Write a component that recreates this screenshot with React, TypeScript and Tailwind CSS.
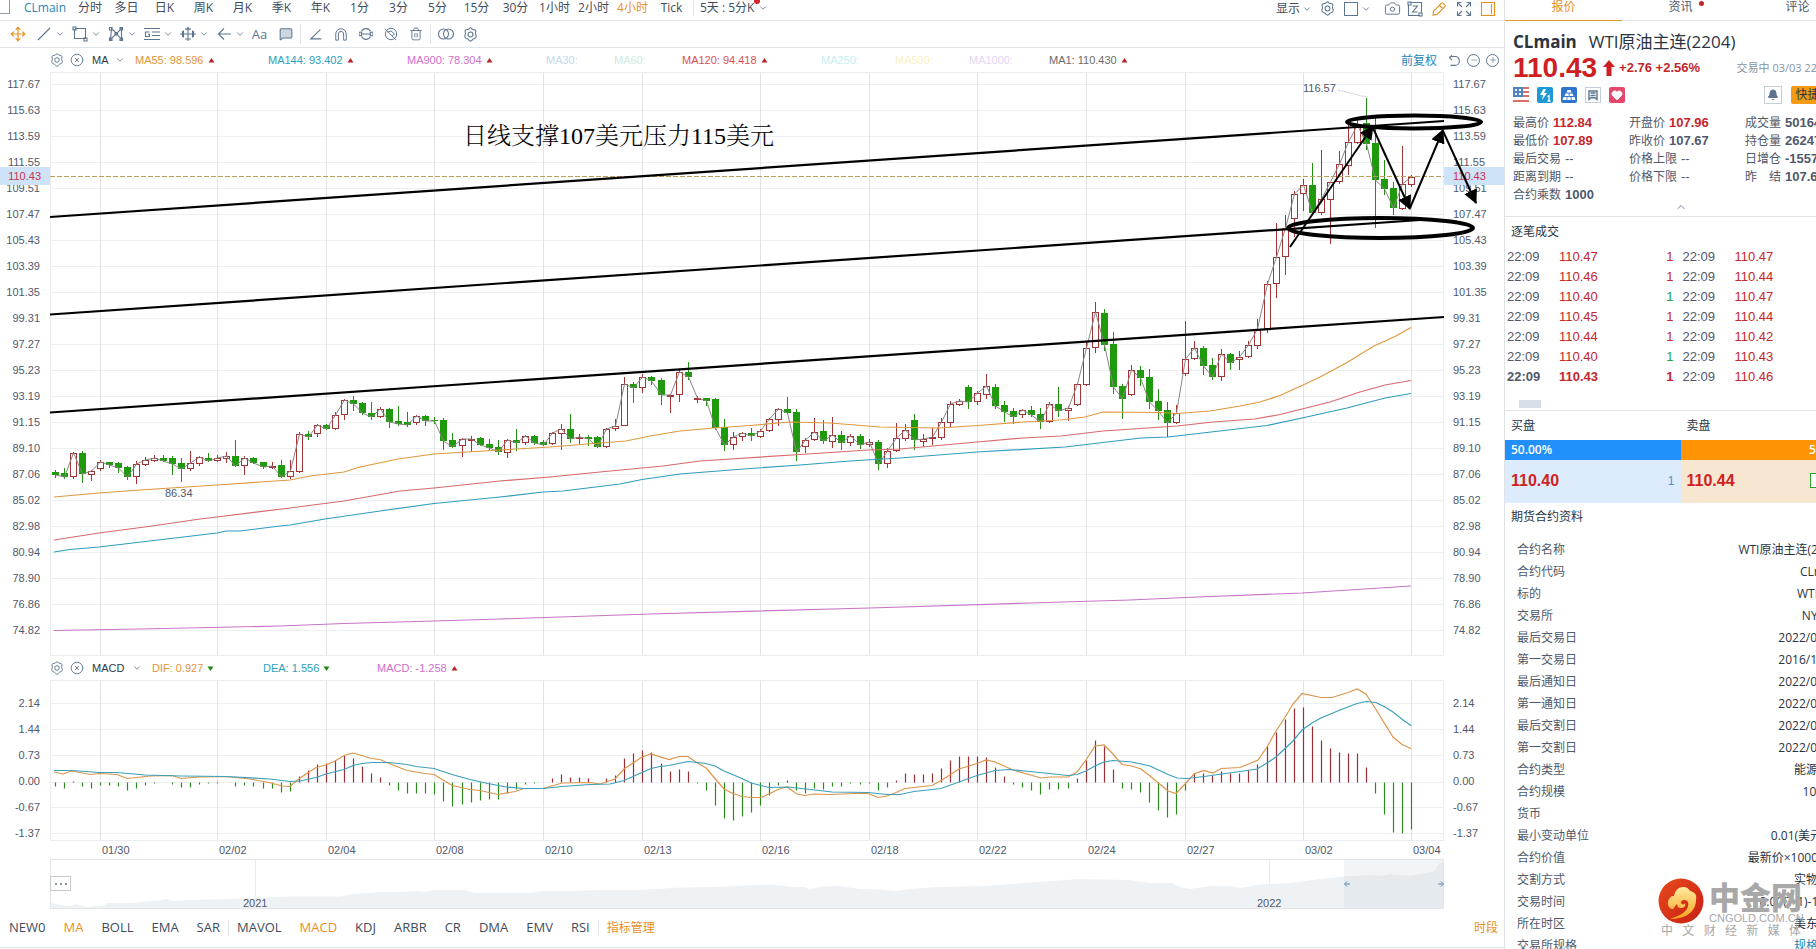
import React from "react";
import {
  Bell,
  Camera,
  ChevronDown,
  ChevronUp,
  CircleX,
  Heart,
  Maximize,
  MessageSquare,
  Minus,
  MoveLeft,
  Move,
  Plus,
  Trash2,
} from "lucide-react";

/* ---------- data ---------- */

// [high, body top, body bottom, low, rising]
type Candle = [number, number, number, number, 0 | 1];

const candles: Candle[] = [
  [470, 472, 475, 478, 0], [468, 473, 477, 479, 0], [452, 453, 477, 479, 1], [451, 453, 474, 483, 0],
  [470, 471, 475, 481, 1], [460, 462, 469, 471, 1], [462, 462, 465, 468, 0], [462, 463, 468, 473, 0],
  [466, 467, 477, 480, 0], [461, 464, 477, 484, 1], [457, 460, 465, 466, 1], [455, 458, 461, 462, 1],
  [455, 458, 461, 462, 0], [456, 458, 464, 475, 0], [458, 463, 469, 482, 0], [451, 463, 469, 471, 1],
  [456, 457, 464, 466, 1], [453, 458, 461, 462, 0], [455, 458, 461, 462, 1], [452, 456, 459, 463, 1],
  [440, 456, 466, 467, 0], [456, 458, 466, 475, 1], [457, 458, 463, 464, 0], [462, 462, 467, 469, 0],
  [462, 466, 468, 469, 1], [460, 465, 477, 478, 0], [460, 471, 477, 479, 1], [432, 434, 472, 473, 1],
  [431, 434, 437, 440, 0], [424, 425, 434, 437, 1], [424, 425, 429, 430, 0], [412, 415, 429, 430, 1],
  [399, 400, 415, 420, 1], [396, 400, 404, 411, 0], [402, 403, 413, 415, 0], [402, 413, 417, 420, 0],
  [407, 409, 417, 418, 1], [408, 409, 422, 428, 0], [406, 421, 424, 426, 0], [412, 422, 425, 427, 0],
  [415, 416, 423, 425, 1], [415, 416, 421, 426, 0], [417, 420, 421, 424, 0], [418, 420, 441, 450, 0],
  [433, 440, 447, 448, 0], [438, 439, 446, 457, 1], [436, 439, 441, 452, 1], [437, 438, 445, 446, 0],
  [439, 444, 448, 450, 0], [440, 447, 452, 455, 0], [439, 440, 453, 458, 1], [429, 440, 443, 451, 0],
  [435, 436, 443, 445, 1], [435, 436, 443, 445, 0], [440, 442, 445, 446, 0], [432, 433, 444, 445, 1],
  [424, 429, 434, 450, 1], [414, 429, 439, 443, 0], [434, 437, 439, 444, 1], [435, 437, 439, 446, 0],
  [436, 437, 447, 448, 0], [428, 429, 447, 448, 1], [419, 426, 429, 431, 1], [377, 384, 426, 426, 1],
  [382, 384, 388, 403, 0], [374, 377, 388, 393, 1], [376, 377, 381, 385, 0], [378, 380, 395, 405, 0],
  [394, 395, 397, 413, 1], [370, 372, 395, 402, 1], [362, 372, 377, 380, 0], [396, 398, 400, 403, 1],
  [398, 398, 401, 406, 0], [398, 399, 428, 430, 0], [419, 427, 445, 451, 0], [432, 437, 445, 450, 1],
  [432, 433, 437, 441, 1], [428, 433, 436, 441, 0], [429, 431, 437, 438, 1], [418, 419, 431, 432, 1],
  [408, 409, 420, 426, 1], [397, 409, 413, 413, 0], [409, 412, 452, 461, 0], [438, 440, 447, 453, 1],
  [418, 432, 440, 441, 1], [420, 431, 441, 444, 0], [417, 435, 442, 448, 1], [431, 435, 443, 450, 0],
  [434, 436, 443, 446, 1], [434, 436, 445, 449, 0], [439, 442, 445, 447, 1], [440, 442, 464, 470, 0],
  [448, 451, 464, 468, 1], [423, 438, 451, 452, 1], [424, 430, 439, 441, 1], [414, 420, 440, 450, 0],
  [434, 439, 442, 447, 1], [428, 437, 439, 445, 1], [418, 422, 438, 440, 1], [401, 404, 423, 427, 1],
  [399, 401, 405, 406, 1], [385, 387, 402, 409, 0], [391, 393, 402, 405, 1], [374, 386, 395, 399, 1],
  [384, 387, 406, 409, 0], [401, 405, 412, 422, 0], [408, 411, 417, 424, 0], [409, 410, 415, 418, 1],
  [406, 410, 415, 417, 0], [408, 414, 422, 429, 0], [402, 404, 422, 423, 1], [387, 404, 411, 417, 0],
  [406, 408, 411, 421, 1], [383, 384, 405, 406, 1], [342, 348, 385, 386, 1], [302, 312, 348, 353, 1],
  [309, 313, 345, 351, 0], [332, 344, 387, 394, 0], [384, 386, 399, 419, 0], [365, 370, 395, 396, 1],
  [366, 370, 378, 386, 0], [369, 377, 402, 409, 0], [389, 401, 411, 420, 0], [402, 410, 423, 437, 0],
  [405, 413, 423, 424, 1], [321, 359, 374, 376, 1], [341, 348, 359, 360, 1], [346, 348, 366, 375, 0],
  [358, 365, 377, 380, 0], [349, 354, 377, 381, 1], [353, 354, 363, 370, 0], [351, 357, 360, 370, 1],
  [341, 345, 357, 358, 1], [319, 329, 346, 349, 1], [281, 284, 329, 333, 1], [223, 257, 284, 298, 1],
  [215, 228, 257, 275, 1], [191, 194, 219, 237, 1], [179, 185, 194, 211, 1], [163, 185, 213, 213, 0],
  [150, 199, 213, 215, 1], [182, 182, 200, 244, 1], [151, 164, 182, 184, 1], [125, 142, 166, 175, 1],
  [120, 125, 143, 144, 1], [98, 123, 144, 150, 0], [117, 143, 180, 228, 0], [160, 179, 189, 195, 0],
  [182, 188, 208, 215, 0], [146, 184, 209, 210, 1], [175, 177, 185, 187, 1],
];

const histogram = [
  -4, -6, 1, -4, -6, -3, -3, -4, -8, -6, -3, -1, 0, -2, -5, -5, -2, -1, -1, 0, -4, -3, -4, -6, -6, -10, -9, 6, 12, 18,
  19, 22, 27, 24, 16, 9, 5, -3, -8, -11, -11, -11, -12, -19, -24, -22, -20, -18, -17, -17, -11, -7, -2, -1, 0, 4, 8, 5,
  5, 4, 0, 4, 7, 24, 29, 32, 30, 19, 11, 13, 11, -1, -8, -23, -36, -38, -34, -30, -23, -13, -3, 2, -8, -11, -6, -7, -4,
  -4, -1, -2, -1, -8, -5, 2, 9, 8, 8, 9, 14, 22, 26, 26, 26, 25, 15, 6, -2, -5, -8, -12, -7, -7, -6, 4, 22, 42, 36, 13,
  -6, -7, -10, -20, -28, -35, -32, -8, 9, 9, 7, 11, 9, 9, 12, 18, 36, 50, 63, 74, 75, 56, 42, 34, 30, 29, 29, 15, -11,
  -32, -50, -51, -47,
];

const ma55 =
  "54,497 99,493 140,490 217,485 260,482 290,480 310,476 344,472 360,467 398,459 434,454 500,450 550,447 600,443 626,441 650,436 680,431 714,428 750,425.5 790,422 830,423 880,427 910,427.5 940,428 985,425 1023,422 1060,420 1085,417 1103,412 1160,412.5 1177,413.5 1210,411 1240,406 1260,402 1280,395.5 1302,385.5 1321,376.5 1347,362.5 1374,346 1395,336.5 1411,327.5";
const ma120 =
  "54,540 99,533 152,526 200,519 217,517 290,508 344,501 400,491 434,488 500,481 550,477 600,472 663,466 700,461 800,454.5 868,450 900,449 977,442 1023,438 1061,436 1103,431 1177,426 1213,422 1255,419 1280,414.5 1302,409 1330,402 1360,392 1385,385 1411,380.5";
const ma144 =
  "54,552 70,549.5 99,547 217,533 226,531 240,531 280,526 290,525 325,519 380,511 434,503.5 500,497 543,492 563,491 620,484 642,479.5 680,474 750,468.5 800,465 850,461 900,458 977,452 1065,447 1141,438 1168,437 1267,425.5 1302,418 1347,408 1385,398 1411,393.5";
const ma900 = "54,630.5 140,629 280,626 344,623.5 434,621 500,619 650,614 870,608 1030,603 1130,600 1185,597.5 1302,593 1411,586";
const dif =
  "54,772 63,774 72,771 90,774.5 99,773.5 117,774.5 127,778.5 150,776 172,775.5 181,778.5 200,777 226,776.5 250,779 271,783 282,786 290,786.5 300,778 316,767.5 326,765 335,761 344,755.5 353,753 362,755.5 371,758.5 380,759.5 389,763.5 407,770.5 425,773.5 434,774.5 443,780 452,785.5 470,789.5 480,790.5 498,794.5 515,791.5 524,788.5 543,788.5 562,783 590,782.5 600,784 615,779 624,769 642,757 651,754 669,759.5 679,756.5 688,756.5 696,762 706,768 715,778.5 724,789 733,793.5 742,796.5 752,797.5 761,797.5 770,793.5 779,789 787,787 797,794 805,795.5 814,794 830,794.5 855,793.5 868,793.5 878,797.5 887,796 895,793 905,788.5 932,785.5 942,780 959,769 977,763.5 986,760 995,762 1013,770 1041,778 1050,777 1068,777 1077,772 1086,760 1095,746 1104,745 1113,754 1122,764.5 1132,766 1141,769 1150,776 1168,791 1176,793.5 1186,783 1194,774 1204,770.5 1213,773 1221,768.5 1240,767.5 1258,760 1267,747 1276,731 1284,719 1293,704 1302,693.5 1321,697.5 1332,697.5 1340,695 1348,692.5 1357,689 1366,694 1375,708 1393,737 1402,744.5 1411,748.5";
const dea =
  "54,770.5 72,770.5 99,772.5 117,772.5 145,775 181,776 226,776.5 270,779 290,781.5 300,781 316,777.5 326,774 344,769.5 353,765.5 362,763.5 371,762.5 389,762.5 407,764.5 416,766.5 434,768.5 452,774.5 470,779.5 488,783.5 506,787 524,788.5 543,788.5 562,786.5 590,784.5 610,784 624,780.5 642,772.5 651,768.5 660,766.5 669,765.5 688,761.5 706,763.5 715,766 724,771 742,778.5 751,783 769,787.5 788,787 815,790 832,792 868,792.5 887,794.5 900,794.5 914,791.5 941,788.5 959,782 977,775.5 995,770.5 1009,769.5 1030,771.5 1068,775.5 1077,774.5 1086,771 1095,766 1104,762 1113,760.5 1132,762 1150,766 1168,774.5 1177,778 1187,778.5 1204,776.5 1222,774 1240,771.5 1257,769 1267,763 1276,757 1293,741 1302,730 1312,723 1321,718 1340,710 1357,703.5 1366,701.5 1376,702.5 1385,707 1393,712 1403,720 1411,725.5";
const history =
  "50,908 50,903 62,905 70,906 76,904 88,907 105,905 107,903 130,903 150,901 158,901 166,899 173,901 190,900 230,899 286,896.5 340,896.5 350,894.5 380,892 400,892 415,891 424,892 434,890 465,890 475,893 530,893 540,891 570,891 600,890 640,890 680,887.5 710,887 740,886 768,884.5 795,887 805,887 810,889 822,886.5 840,886 860,889 880,889.5 895,891 915,888.5 938,887 985,886 1010,884 1050,881 1080,879 1130,880 1150,883 1172,883 1180,887 1190,889 1210,886 1230,886 1240,888 1260,884.5 1290,883 1320,879 1330,878 1344,876.5 1370,875 1380,876 1390,874 1410,876 1425,873 1435,871 1439,863 1444,862 1444,908";

const FIRST_X = 54.5;
const STEP = 9.045;
const xAt = (i: number) => Math.round(FIRST_X + i * STEP) + 0.5;

const dateTicks: [number, string][] = [
  [5, "01/30"], [18, "02/02"], [30, "02/04"], [42, "02/08"], [54, "02/10"], [65, "02/13"], [78, "02/16"],
  [90, "02/18"], [102, "02/22"], [114, "02/24"], [125, "02/27"], [138, "03/02"], [150, "03/04"],
];

const priceLabels = [
  "117.67", "115.63", "113.59", "111.55", "109.51", "107.47", "105.43", "103.39", "101.35", "99.31", "97.27",
  "95.23", "93.19", "91.15", "89.10", "87.06", "85.02", "82.98", "80.94", "78.90", "76.86", "74.82",
];
const macdLabels = ["2.14", "1.44", "0.73", "0.00", "-0.67", "-1.37"];

const periods = ["日K", "周K", "月K", "季K", "年K", "1分", "3分", "5分", "15分", "30分", "1小时", "2小时", "4小时", "Tick"];

const maItems: { text: string; style: string; arrow: boolean }[] = [
  { text: "MA55: 98.596", style: "w-[133px] text-[#e2943a]", arrow: true },
  { text: "MA144: 93.402", style: "w-[139px] text-[#2ba0bd]", arrow: true },
  { text: "MA900: 78.304", style: "w-[139px] text-[#d070cc]", arrow: true },
  { text: "MA30:", style: "w-[68px] text-[#c5d9ec]", arrow: false },
  { text: "MA60:", style: "w-[68px] text-[#cdeadb]", arrow: false },
  { text: "MA120: 94.418", style: "w-[139px] text-[#dc4f55]", arrow: true },
  { text: "MA250:", style: "w-[74px] text-[#c5f0f5]", arrow: false },
  { text: "MA500:", style: "w-[74px] text-[#faf0cc]", arrow: false },
  { text: "MA1000:", style: "w-[80px] text-[#e6d3f2]", arrow: false },
  { text: "MA1: 110.430", style: "text-[#6b6b6b]", arrow: true },
];

const stats: { label: string; value: string; up?: boolean }[][] = [
  [
    { label: "最高价", value: "112.84", up: true },
    { label: "最低价", value: "107.89", up: true },
    { label: "最后交易", value: "--" },
    { label: "距离到期", value: "--" },
    { label: "合约乘数", value: "1000" },
  ],
  [
    { label: "开盘价", value: "107.96", up: true },
    { label: "昨收价", value: "107.67" },
    { label: "价格上限", value: "--" },
    { label: "价格下限", value: "--" },
  ],
  [
    { label: "成交量", value: "501640" },
    { label: "持仓量", value: "262470" },
    { label: "日增仓", value: "-15570" },
    { label: "昨　结", value: "107.67" },
  ],
];

const trades: { price: string; up: boolean; price2: string }[] = [
  { price: "110.47", up: true, price2: "110.47" },
  { price: "110.46", up: true, price2: "110.44" },
  { price: "110.40", up: false, price2: "110.47" },
  { price: "110.45", up: true, price2: "110.44" },
  { price: "110.44", up: true, price2: "110.42" },
  { price: "110.40", up: false, price2: "110.43" },
  { price: "110.43", up: true, price2: "110.46" },
];

const contract: [string, string][] = [
  ["合约名称", "WTI原油主连(2204)"], ["合约代码", "CLmain"], ["标的", "WTI原油"], ["交易所", "NYMEX"],
  ["最后交易日", "2022/03/22"], ["第一交易日", "2016/11/21"], ["最后通知日", "2022/03/24"],
  ["第一通知日", "2022/03/24"], ["最后交割日", "2022/04/30"], ["第一交割日", "2022/04/01"],
  ["合约类型", "能源期货"], ["合约规模", "1000桶"], ["货币", "美元"], ["最小变动单位", "0.01(美元/桶)"],
  ["合约价值", "最新价×1000美元"], ["交割方式", "实物交割"], ["交易时间", "18:00(T-1)-17:00"],
  ["所在时区", "美东时间"], ["交易所规格", "规格说明"],
];

/* ---------- small pieces ---------- */

const NUM = "font-['Liberation_Sans',Arial,sans-serif]";

function Svg({ children, size = 16, className = "" }: { children: React.ReactNode; size?: number; className?: string }) {
  return (
    <svg viewBox="0 0 16 16" width={size} height={size} fill="none" stroke="currentColor" strokeWidth="1.1" className={`shrink-0 ${className}`}>
      {children}
    </svg>
  );
}

function HexGear({ size = 16 }: { size?: number }) {
  return (
    <Svg size={size}>
      <path
        d="M5.4 2.6C6.6 2.6 6.900 .8 8 .8s1.400 1.800 2.600 1.800 2.600.2 3.100 1.200S12.800 6.600 13.400 7.600s1.100 2.400.3 3.600-2.300.8-3.100 1.800S9.100 15.200 8 15.200s-1.800-1.200-2.600-2.200-2.300-.6-3.100-1.800-.3-2.600.3-3.600S1.800 4.800 2.300 3.800s1.900-1.200 3.100-1.200z"
        strokeLinejoin="round"
      />
      <circle cx="8" cy="8" r="2.6" />
    </Svg>
  );
}

function Triangle({ up }: { up: boolean }) {
  return (
    <svg width="7" height="5" viewBox="0 0 7 5" className="ml-1 shrink-0">
      {up ? <path d="M3.5 0L6.5 4.5H.5z" fill="#b3262b" /> : <path d="M3.5 5L6.5.5H.5z" fill="#1c8a12" />}
    </svg>
  );
}

function DrawTool({ label, width = "w-9", children }: { label: string; width?: string; children: React.ReactNode }) {
  return (
    <button aria-label={label} className={`flex h-6 items-center gap-[3px] ${width}`}>
      {children}
      <ChevronDown size={10} strokeWidth={2} />
    </button>
  );
}

function IconButton({ label, className = "", children }: { label: string; className?: string; children: React.ReactNode }) {
  return (
    <button aria-label={label} className={`flex h-6 w-[25px] shrink-0 items-center justify-center ${className}`}>
      {children}
    </button>
  );
}

function IndicatorHead({ name, nameWidth }: { name: string; nameWidth: string }) {
  return (
    <div className="flex items-center text-[#5d7590]">
      <button aria-label={`${name} 设置`}><HexGear size={14} /></button>
      <button aria-label={`关闭 ${name}`} className="ml-[6px]"><CircleX size={14} strokeWidth={1.5} /></button>
      <span className={`ml-2 text-[#2f3844] ${nameWidth}`}>{name}</span>
      <button aria-label={`切换 ${name}`} className="ml-[2px]"><ChevronDown size={10} strokeWidth={2} /></button>
    </div>
  );
}

function AxisLabels({ values, align, className = "" }: { values: string[]; align: "left" | "right"; className?: string }) {
  return (
    <div className={`flex flex-col text-[#50596b] ${className} ${align === "right" ? "items-end pr-[10px]" : "items-start pl-[9px]"}`}>
      {values.map((v) => (
        <span key={v} className="flex h-[26px] shrink-0 items-center">{v}</span>
      ))}
    </div>
  );
}

/* ---------- charts ---------- */

function Grid({ top, bottom, rows }: { top: number; bottom: number; rows: number[] }) {
  return (
    <g>
      {rows.map((y) => <line key={y} x1="50" x2="1444" y1={y} y2={y} stroke="#edf0f2" />)}
      {dateTicks.map(([i]) => <line key={i} x1={xAt(i)} x2={xAt(i)} y1={top} y2={bottom} stroke="#e2e3e6" />)}
      <rect x="50.5" y={top + 0.5} width="1393" height={bottom - top - 1} fill="none" stroke="#eaecef" />
    </g>
  );
}

function PriceChart() {
  const closes = candles.map((c, i) => `${xAt(i)},${c[4] ? c[1] : c[2]}`).join(" ");
  return (
    <svg viewBox="50 71 1394 585" preserveAspectRatio="none" className="relative z-10 block h-[585px] w-full overflow-visible" role="img" aria-label="CLmain 4小时 K线图">
      <defs>
        <marker id="head" viewBox="0 0 14 14" refX="13" refY="7" markerWidth="14" markerHeight="14" markerUnits="userSpaceOnUse" orient="auto">
          <path d="M0 0L14 7L0 14z" fill="#000" />
        </marker>
      </defs>
      <Grid top={72} bottom={656} rows={priceLabels.map((_, i) => 84.5 + i * 26)} />
      {candles.map(([high, top, bottom, low, up], i) => {
        const x = xAt(i);
        return up ? (
          <g key={i} stroke="#a33335" fill="none">
            <line x1={x} x2={x} y1={high} y2={top} />
            <line x1={x} x2={x} y1={bottom} y2={low} />
            <rect x={x - 3} y={top + 0.5} width="6" height={Math.max(1, bottom - top - 1)} fill="#fff" />
          </g>
        ) : (
          <g key={i}>
            <line x1={x} x2={x} y1={high} y2={low} stroke="#1f9010" />
            <rect x={x - 3.5} y={top} width="7" height={Math.max(1, bottom - top)} fill="#1f9a0d" />
          </g>
        );
      })}
      <g fill="none" strokeWidth="1.2">
        <polyline points={closes} stroke="#8b8585" strokeWidth="1" />
        <polyline points={ma55} stroke="#e0983f" />
        <polyline points={ma120} stroke="#d86a6a" />
        <polyline points={ma144} stroke="#2f9dbd" />
        <polyline points={ma900} stroke="#c774c7" />
      </g>
      <line x1="50" x2="1444" y1="176.5" y2="176.5" stroke="#bd9f5c" strokeDasharray="5 2" />
      <g stroke="#000" strokeWidth="2.2">
        <line x1="50" y1="217" x2="1444" y2="121" />
        <line x1="50" y1="314.5" x2="1420" y2="220" />
        <line x1="50" y1="412.5" x2="1444" y2="317" />
      </g>
      <g stroke="#000" strokeWidth="4" fill="none">
        <ellipse cx="1414" cy="122" rx="67" ry="6.5" />
        <ellipse cx="1380.5" cy="228" rx="92.5" ry="10" />
      </g>
      <g stroke="#000" strokeWidth="2">
        <line x1="1290" y1="247" x2="1373" y2="126" markerEnd="url(#head)" />
        <line x1="1373" y1="128" x2="1410" y2="209" markerEnd="url(#head)" />
        <line x1="1410" y1="208" x2="1443" y2="130" markerEnd="url(#head)" />
        <line x1="1443" y1="131" x2="1476" y2="203" markerEnd="url(#head)" />
      </g>
      <line x1="1338" y1="90" x2="1366" y2="97" stroke="#c9c9c9" strokeDasharray="2 1" />
      <g className={NUM} fontSize="11" fill="#50596b">
        <text x="1303" y="92">116.57</text>
        <text x="165" y="497">86.34</text>
      </g>
      <text x="463" y="144" fontSize="24" fill="#000" fontWeight="300" className="font-['Liberation_Serif','Noto_Serif_CJK_SC','Noto_Sans_CJK_SC',serif]">
        日线支撑107美元压力115美元
      </text>
    </svg>
  );
}

function MacdChart() {
  return (
    <svg viewBox="50 680 1394 161" preserveAspectRatio="none" className="block h-[161px] w-full" role="img" aria-label="MACD">
      <Grid top={680} bottom={841} rows={[703.5, 729.5, 755.5, 782.5, 807.5, 833.5]} />
      {histogram.map((h, i) =>
        h === 0 ? null : (
          <line key={i} x1={xAt(i)} x2={xAt(i)} y1={782.5} y2={782.5 - h} stroke={h > 0 ? "#9c2f33" : "#2b8a1e"} strokeWidth="1.2" />
        ),
      )}
      <g fill="none" strokeWidth="1.2">
        <polyline points={dif} stroke="#dd944a" />
        <polyline points={dea} stroke="#3c9fbc" />
      </g>
    </svg>
  );
}

function Navigator() {
  return (
    <div className="relative">
      <svg viewBox="50 859 1394 50" preserveAspectRatio="none" className="block h-[50px] w-full" role="img" aria-label="历史区间">
        <line x1="255.5" x2="255.5" y1="859" y2="909" stroke="#e8eaed" />
        <line x1="1269.5" x2="1269.5" y1="859" y2="909" stroke="#e8eaed" />
        <polygon points={history} fill="#eff2f5" />
        <rect x="1344" y="859" width="100" height="50" fill="#b9c6d4" fillOpacity="0.18" />
        <rect x="50.5" y="859.5" width="1393" height="49" fill="none" stroke="#e3e5e8" />
        <path d="M1350 884h-5m2-2.500l-2.500 2.500 2.500 2.500M1438 884h5m-2-2.500l2.500 2.500-2.500 2.500" fill="none" stroke="#5b87b5" />
        <g className={NUM} fontSize="11" fill="#50596b">
          <text x="243" y="907">2021</text>
          <text x="1257" y="907">2022</text>
        </g>
      </svg>
      <button aria-label="更多" className="absolute top-[17px] left-0 flex h-[15px] w-[21px] items-center justify-center gap-[3px] border border-[#c5cad1] bg-white">
        <i className="size-[2px] rounded-full bg-[#6b7583]" />
        <i className="size-[2px] rounded-full bg-[#6b7583]" />
        <i className="size-[2px] rounded-full bg-[#6b7583]" />
      </button>
    </div>
  );
}

/* ---------- toolbars ---------- */

function PeriodBar() {
  return (
    <nav className="flex h-[21px] shrink-0 items-start justify-between border-b border-[#e1e4e8] pr-2 text-[12px] leading-[14px] text-[#3f4c5c]">
      <div className="flex">
        <div className="h-[14px] w-[10px] border-r border-b border-[#8c9bab]" />
        <button className="w-[62px] pl-2 text-center text-[#2586b8]">CLmain</button>
        <button className="w-9">分时</button>
        <button className="w-[37px]">多日</button>
        {periods.map((p) => (
          <button key={p} className={p === "4小时" ? "w-[39px] text-[#e8901f]" : "w-[39px]"}>{p}</button>
        ))}
        <div className="ml-[2px] h-[16px] w-px bg-[#e1e4e8]" />
        <button className="relative ml-[6px] flex items-center gap-1">
          5天 : 5分K
          <span className="absolute -top-[2px] left-[54px] size-[6px] rounded-full bg-[#d8232a]" />
          <ChevronDown size={10} strokeWidth={2} className="text-[#5d7590]" />
        </button>
      </div>
      <div className="flex items-center text-[#5d7590]">
        <button className="mr-2 flex items-center gap-[2px] text-[#3f4c5c]">显示 <ChevronDown size={10} strokeWidth={2} className="text-[#5d7590]" /></button>
        <button aria-label="设置" className="mr-[9px]"><HexGear size={15} /></button>
        <button aria-label="布局" className="mr-[13px] flex items-center gap-[3px]">
          <span className="size-[14px] border border-[#5d7590]" />
          <ChevronDown size={10} strokeWidth={2} />
        </button>
        <button aria-label="截图" className="mr-[6px]"><Camera size={17} strokeWidth={1.4} /></button>
        <button aria-label="编辑" className="mr-2">
          <Svg><path d="M3 1.500h11.500V12M13 14.500H1.500V4M1 1h3v3H1zM12 12h3v3h-3zM5.500 5h5l-5 6h5" /></Svg>
        </button>
        <button aria-label="画线" className="mr-[9px] text-[#e8901f]">
          <Svg><path d="M2 14l.7-4L10.500 2.200a1 1 0 011.400 0l2 2a1 1 0 010 1.400L6 13.400zM8.500 4.500L11.800 7.700" /></Svg>
        </button>
        <button aria-label="全屏" className="mr-2">
          <Svg><path d="M1.500 5.500v-4h4M1.500 1.500l4.500 4.500M14.500 5.500v-4h-4M14.500 1.500L10 6M1.500 10.500v4h4M1.500 14.500L6 10M14.500 10.500v4h-4M14.500 14.500L10 10" /></Svg>
        </button>
        <button aria-label="侧栏" className="text-[#e8901f]"><Svg><path d="M1.500 1.500h13v13h-13zM11.500 3v10" /></Svg></button>
      </div>
    </nav>
  );
}

function DrawBar() {
  return (
    <div className="flex h-[27px] shrink-0 items-center border-b border-[#e1e4e8] pl-[5px] text-[#5d7590]">
      <IconButton label="移动" className="mr-[6px] text-[#e8901f]"><Move size={16} strokeWidth={1.8} /></IconButton>
      <DrawTool label="线段"><Svg><path d="M2 14L14 2" /></Svg></DrawTool>
      <DrawTool label="矩形"><Svg><path d="M2.500 3v9.500H13M3 2.500h10.500V13M1 1h3v3H1zM12 12h3v3h-3z" /></Svg></DrawTool>
      <DrawTool label="形态"><Svg><path d="M2.500 13.500l1-11 5 5 5-5v11l-5-6zM1.500 1.500h2.500v2.500H1.500zM12 1.500h2.500v2.500H12zM1.500 12h2.500v2.500H1.500zM12 12h2.500v2.500H12zM7 6.500h2.500V9H7z" /></Svg></DrawTool>
      <DrawTool label="江恩"><Svg><path d="M0 2.500h16M8 6h8M8 9.500h8M0 13.500h16M5.500 6H1.500v4.500h4V8.300H4" /></Svg></DrawTool>
      <DrawTool label="测量"><Svg><path d="M8 1v14M0 8h16M5 3h6M5 13h6M2.500 5v6M13.500 5v6M3.500 4.500v7M12.500 4.500v7M6 4l2-2.500L10 4" /></Svg></DrawTool>
      <DrawTool label="箭头" width="w-[30px]"><Svg><path d="M15 8H3M8 2.500L2.500 8 8 13.500" /></Svg></DrawTool>
      <button aria-label="文本" className="w-[27px] text-center text-[13px] leading-4">Aa</button>
      <IconButton label="注释"><MessageSquare size={14} strokeWidth={1.8} fill="#ccd7e2" /></IconButton>
      <div className="mx-[2px] h-5 w-px bg-[#e1e4e8]" />
      <IconButton label="角度"><Svg size={14}><path d="M13 3L2 13.500h12" strokeWidth="1.3" /></Svg></IconButton>
      <IconButton label="磁吸"><Svg size={14}><path d="M2 15V8a6 6 0 0112 0v7h-3V8a3 3 0 00-6 0v7z" /></Svg></IconButton>
      <IconButton label="连续画图"><Svg size={14}><path d="M3 5a5.500 5.500 0 0110 0M3 11a5.500 5.500 0 0010 0M0 6h3v4H0zM13 6h3v4h-3zM3 8h10" strokeWidth="1.3" /></Svg></IconButton>
      <IconButton label="隐藏"><Svg size={14}><circle cx="8" cy="8" r="6.5" /><path d="M1 2l13 13M4 6l4-1.500L12 8l-3 2.500" /></Svg></IconButton>
      <IconButton label="删除"><Trash2 size={14} strokeWidth={1.6} /></IconButton>
      <div className="mx-[2px] h-5 w-px bg-[#e1e4e8]" />
      <IconButton label="对比"><Svg><circle cx="5.500" cy="8" r="5" /><circle cx="10.500" cy="8" r="5" /></Svg></IconButton>
      <IconButton label="画图设置"><HexGear size={15} /></IconButton>
    </div>
  );
}

function IndicatorTabs() {
  const item = (name: string, active = false) => (
    <button key={name} className={active ? "text-[#e8901f]" : ""}>{name}</button>
  );
  return (
    <nav className="flex h-[39px] shrink-0 items-center justify-between border-b border-[#dfe2e6] pr-[6px] pl-[9px] text-[12px] text-[#3f4c5c]">
      <div className="flex items-center gap-[18px] text-[13px]">
        {item("NEW0")}
        {item("MA", true)}
        {item("BOLL")}
        {item("EMA")}
        {item("SAR")}
        <div className="-mx-[10px] h-4 w-px bg-[#e1e4e8]" />
        {item("MAVOL")}
        {item("MACD", true)}
        {item("KDJ")}
        {item("ARBR")}
        {item("CR")}
        {item("DMA")}
        {item("EMV")}
        {item("RSI")}
        <div className="-mx-[10px] h-4 w-px bg-[#e1e4e8]" />
        <button className="text-[12px] text-[#e8901f]">指标管理</button>
      </div>
      {item("时段", true)}
    </nav>
  );
}

/* ---------- quote panel ---------- */

function QuoteHeader() {
  return (
    <section className="border-b border-[#e1e4e8] pr-2 pb-[3px] pl-2">
      <h1 className="flex items-center gap-3 pt-[9px] text-[17px] leading-6 text-[#2a3442]">
        <b>CLmain</b>
        <span>WTI原油主连(2204)</span>
      </h1>
      <div className="flex h-7 items-center">
        <strong className={`text-[28px] leading-7 text-[#cf1f23] ${NUM}`}>110.43</strong>
        <svg width="12" height="16" viewBox="0 0 12 16" className="ml-[6px]"><path d="M6 0l6 7H8.500v9h-5V7H0z" fill="#cf1f23" /></svg>
        <b className={`ml-1 text-[13px] text-[#c3272b] ${NUM}`}>+2.76 +2.56%</b>
        <span className="ml-auto whitespace-nowrap text-[11px] text-[#8794a3]">交易中 03/03 22:09:35</span>
      </div>
      <div className="flex h-[26px] items-center gap-2">
        <svg width="16" height="16" viewBox="0 0 16 16">
          <path d="M0 1h16M0 5h16M0 9h16M0 14h16" stroke="#dd6f68" strokeWidth="2" />
          <rect width="10" height="10" fill="#4c84c4" />
          <path d="M2 3h2M6 3h2M2 7h2M6 7h2" stroke="#fff" strokeWidth="2" />
        </svg>
        <svg width="16" height="16" viewBox="0 0 16 16">
          <rect width="16" height="16" rx="2" fill="#1d9ad6" />
          <path d="M6.500 2L3 8h3l-1 5 5-7H7l2-4z" fill="#fff" />
          <path d="M10.500 9.500L12 8.500V14M10.500 14h3" stroke="#fff" fill="none" strokeWidth="1.3" />
        </svg>
        <svg width="16" height="16" viewBox="0 0 16 16">
          <rect width="16" height="16" rx="2" fill="#2f74cf" />
          <path d="M6.500 3h3l1 2.500h-5zM4.500 6.500h3l.3 2.500h-4.300zM8.500 6.500h3l1 2.500H8.500zM2.500 10h3.200l-.2 3h-4zM6.500 10h3l.3 3H6.200zM10.500 10h3l1 3h-4z" fill="#fff" />
        </svg>
        <svg width="16" height="16" viewBox="0 0 16 16">
          <rect x=".5" y=".5" width="15" height="15" fill="#fff" stroke="#c5cdd6" />
          <path d="M4 4h8v8.500l-2-1.800H6l-2 1.800zM5.500 6h5M5.500 8.500h5" fill="none" stroke="#5d7590" strokeWidth="1.4" />
        </svg>
        <span className="flex size-4 items-center justify-center rounded-[2px] bg-[#e4496b] text-white"><Heart size={12} fill="#fff" /></span>
        <button aria-label="提醒" className="mr-px ml-auto flex size-[18px] items-center justify-center border border-[#c5cdd6] text-[#5d7590]"><Bell size={12} fill="currentColor" /></button>
        <button className="h-[18px] w-[57px] rounded-[2px] bg-[#f39a16] text-[12px] leading-[18px] text-[#2a3442]">快捷交易</button>
      </div>
      <div className="mt-[6px] flex text-[12px] leading-[18px] text-[#50596b]">
        {stats.map((column, i) => (
          <dl key={i} className="w-[116px] shrink-0">
            {column.map((s) => (
              <div key={s.label} className="flex gap-1">
                <dt>{s.label}</dt>
                <dd className={`text-[13px] ${NUM} ${s.value === "--" ? "" : "font-bold"} ${s.up ? "text-[#c3272b]" : ""}`}>{s.value}</dd>
              </div>
            ))}
          </dl>
        ))}
      </div>
      <button aria-label="收起" className="mx-auto block h-[9px] text-[#5d7590]"><ChevronUp size={12} strokeWidth={1.8} className="-mt-1" /></button>
    </section>
  );
}

function Trades() {
  return (
    <section className="border-b border-[#e1e4e8]">
      <h2 className="pt-[5px] pl-[6px] text-[12px] leading-5 text-[#2a3442]">逐笔成交</h2>
      <table className={`mt-[5px] w-full table-fixed text-[13px] leading-5 text-[#50596b] ${NUM}`}>
        <tbody>
          {trades.map((t, i) => (
            <tr key={i}>
              <td className={`w-[54px] p-0 pl-[2px] ${i === 6 ? "font-bold" : ""}`}>22:09</td>
              <td className={`p-0 text-[#c3272b] ${i === 6 ? "font-bold" : ""}`}>{t.price}</td>
              <td className={`w-[32px] p-0 pr-[7px] text-right ${t.up ? "text-[#c3272b]" : "text-[#25a52c]"} ${i === 6 ? "font-bold" : ""}`}>1</td>
              <td className="w-[54px] p-0 pl-[2px]">22:09</td>
              <td className="p-0 text-[#c3272b]">{t.price2}</td>
              <td className="w-[32px] p-0 pr-[7px] text-right text-[#c3272b]">1</td>
            </tr>
          ))}
        </tbody>
      </table>
      <div className="mt-[13px] mb-[2px] ml-[14px] h-2 w-[22px] bg-[#d9dfe6]" />
    </section>
  );
}

function OrderBook() {
  return (
    <section className="grid grid-cols-2 text-[12px]">
      <h2 className="pl-[6px] leading-[29px] text-[#2a3442]">买盘</h2>
      <h2 className="pl-[6px] leading-[29px] text-[#2a3442]">卖盘</h2>
      <div className="bg-[#2290fb] pl-[6px] leading-5 font-semibold text-white">50.00%</div>
      <div className="bg-[#fe9304] pr-[6px] text-right leading-5 font-semibold text-white">50.00%</div>
      <div className={`flex h-[43px] items-center justify-between bg-[#dcecfc] pr-[6px] pb-[2px] pl-[6px] ${NUM}`}>
        <b className="text-[16px] text-[#cf1f23]">110.40</b>
        <span className="text-[#5b8fc7]">1</span>
      </div>
      <div className={`flex h-[43px] items-center justify-between bg-[#f8e7d0] pr-[6px] pb-[2px] pl-[6px] ${NUM}`}>
        <b className="text-[16px] text-[#cf1f23]">110.44</b>
        <span className="flex h-[15px] w-[40px] items-center justify-center border border-[#25a52c] bg-white text-[#25a52c]">1</span>
      </div>
    </section>
  );
}

function ContractInfo() {
  return (
    <section className="text-[12px] text-[#2a3442]">
      <h2 className="pt-[4px] pl-[6px] leading-5">期货合约资料</h2>
      <dl className="mt-[12px] pr-[14px] pl-3 leading-[22px]">
        {contract.map(([k, v]) => (
          <div key={k} className="flex justify-between">
            <dt className="text-[#50596b]">{k}</dt>
            <dd className={k === "交易所规格" ? "text-[#2586b8]" : ""}>{v}</dd>
          </div>
        ))}
      </dl>
    </section>
  );
}

function BrandMark() {
  return (
    <div className="pointer-events-none absolute right-[15px] bottom-[11px] w-[140px] text-[#a8a8a8]">
      <div className="flex items-center">
        <svg width="46" height="46" viewBox="0 0 46 46" className="-ml-[3px] shrink-0">
          <defs>
            <linearGradient id="red" x1="0" y1="0" x2="1" y2="1">
              <stop offset="0" stopColor="#e84a1c" />
              <stop offset="1" stopColor="#c81e14" />
            </linearGradient>
            <linearGradient id="gold" x1="0" y1="0" x2="0" y2="1">
              <stop offset="0" stopColor="#ffe9a0" />
              <stop offset="1" stopColor="#f7a41d" />
            </linearGradient>
          </defs>
          <circle cx="23" cy="23" r="22.5" fill="url(#red)" />
          <path d="M15 31c-5 0-7-7-3-11 1-2 3-2 4-2 1-6 5-9 9-9 4 0 6 2 7 4 5 1 7 4 6 9 0 10-8 19-26 19 9-3 17-7 18-13 1-4-1-6-4-6-3 0-4 3-2 4 1 1 3 0 3-1 1 3-1 5-4 5-3 0-4-2-4-4-2 1-2 3-4 5z" fill="url(#gold)" />
        </svg>
        <div className="ml-[5px] flex flex-col pt-1">
          <span className="text-[31px] leading-8 font-black whitespace-nowrap">中金网</span>
          <span className={`text-[11px] leading-[11px] ${NUM}`}>CNGOLD.COM.CN</span>
        </div>
      </div>
      <div className="flex justify-between text-[12px] leading-[14px]">
        {Array.from("中文财经新媒体").map((c) => <span key={c}>{c}</span>)}
      </div>
    </div>
  );
}

function QuotePanel() {
  return (
    <aside className="relative w-[312px] shrink-0 overflow-hidden border-l border-[#dfe2e6] bg-white">
      <div className="w-[351px]">
        <nav className="flex h-[21px] text-[12px] leading-[14px] text-[#50596b]">
          <button className="flex w-[117px] justify-center border-b border-[#dd9a2c] text-[#e8901f]">报价</button>
          <button className="relative flex w-[117px] justify-center border-b border-[#e1e4e8]">
            资讯
            <span className="absolute top-px left-[77px] size-[5px] rounded-full bg-[#c3272b]" />
          </button>
          <button className="flex w-[117px] justify-center border-b border-[#e1e4e8]">评论</button>
        </nav>
        <QuoteHeader />
        <Trades />
        <OrderBook />
        <ContractInfo />
      </div>
      <BrandMark />
    </aside>
  );
}

/* ---------- page ---------- */

export default function App() {
  return (
    <div className="flex h-screen overflow-hidden bg-white font-['Open_Sans','Noto_Sans_CJK_SC',sans-serif]">
      <main className="flex min-w-0 flex-1 flex-col">
        <PeriodBar />
        <DrawBar />

        <div className={`flex h-[23px] shrink-0 items-center pt-px pl-[50px] text-[11px] ${NUM}`}>
          <IndicatorHead name="MA" nameWidth="w-[21px]" />
          <div className="ml-[10px] flex">
            {maItems.map((m) => (
              <span key={m.text} className={`flex shrink-0 items-center whitespace-nowrap ${m.style}`}>
                {m.text}
                {m.arrow && <Triangle up />}
              </span>
            ))}
          </div>
          <div className="ml-auto flex items-center gap-[6px] pr-[5px] text-[#5d7590]">
            <button className="mr-[5px] font-['Noto_Sans_CJK_SC',sans-serif] text-[12px] text-[#2586b8]">前复权</button>
            <button aria-label="撤销"><Svg size={13}><path d="M5 1.500L2 4.500l3 3M2 3h6.500a5.500 5.500 0 010 11H3" strokeWidth="1.3" /></Svg></button>
            <button aria-label="缩小" className="flex size-[13px] items-center justify-center rounded-full border border-[#5d7590]"><Minus size={8} /></button>
            <button aria-label="放大" className="flex size-[13px] items-center justify-center rounded-full border border-[#5d7590]"><Plus size={8} /></button>
          </div>
        </div>

        <div className={`grid shrink-0 grid-cols-[50px_minmax(0,1fr)_60px] text-[11px] ${NUM}`}>
          <div className="relative">
            <AxisLabels values={priceLabels} align="right" />
            <div className="absolute top-24 left-0 flex h-[18px] w-full items-center justify-end bg-[#cfe3f8] pr-[9px] text-[#c8324c]">110.43</div>
          </div>
          <PriceChart />
          <div className="relative">
            <AxisLabels values={priceLabels} align="left" />
            <div className="absolute top-24 left-0 flex h-[18px] w-full items-center bg-[#cfe3f8] pl-[9px] text-[#c8324c]">110.43</div>
          </div>
        </div>

        <div className={`flex h-6 shrink-0 items-center pl-[50px] text-[11px] ${NUM}`}>
          <IndicatorHead name="MACD" nameWidth="w-[38px]" />
          <span className="ml-[10px] flex w-[111px] items-center text-[#e2943a]">DIF: 0.927<Triangle up={false} /></span>
          <span className="flex w-[114px] items-center text-[#2ba0bd]">DEA: 1.556<Triangle up={false} /></span>
          <span className="flex items-center text-[#d070cc]">MACD: -1.258<Triangle up /></span>
        </div>

        <div className={`grid shrink-0 grid-cols-[50px_minmax(0,1fr)_60px] text-[11px] ${NUM}`}>
          <AxisLabels values={macdLabels} align="right" className="h-[161px] pt-[10px]" />
          <MacdChart />
          <AxisLabels values={macdLabels} align="left" className="h-[161px] pt-[10px]" />
          <div />
          <svg viewBox="50 841 1394 18" preserveAspectRatio="none" className="block h-[18px] w-full overflow-visible">
            {dateTicks.map(([i, d]) => (
              <text key={d} x={xAt(i) + 1.5} y="854" fontSize="11" fill="#50596b">{d}</text>
            ))}
          </svg>
          <div />
          <div />
          <Navigator />
          <div />
        </div>

        <IndicatorTabs />
      </main>
      <QuotePanel />
    </div>
  );
}
